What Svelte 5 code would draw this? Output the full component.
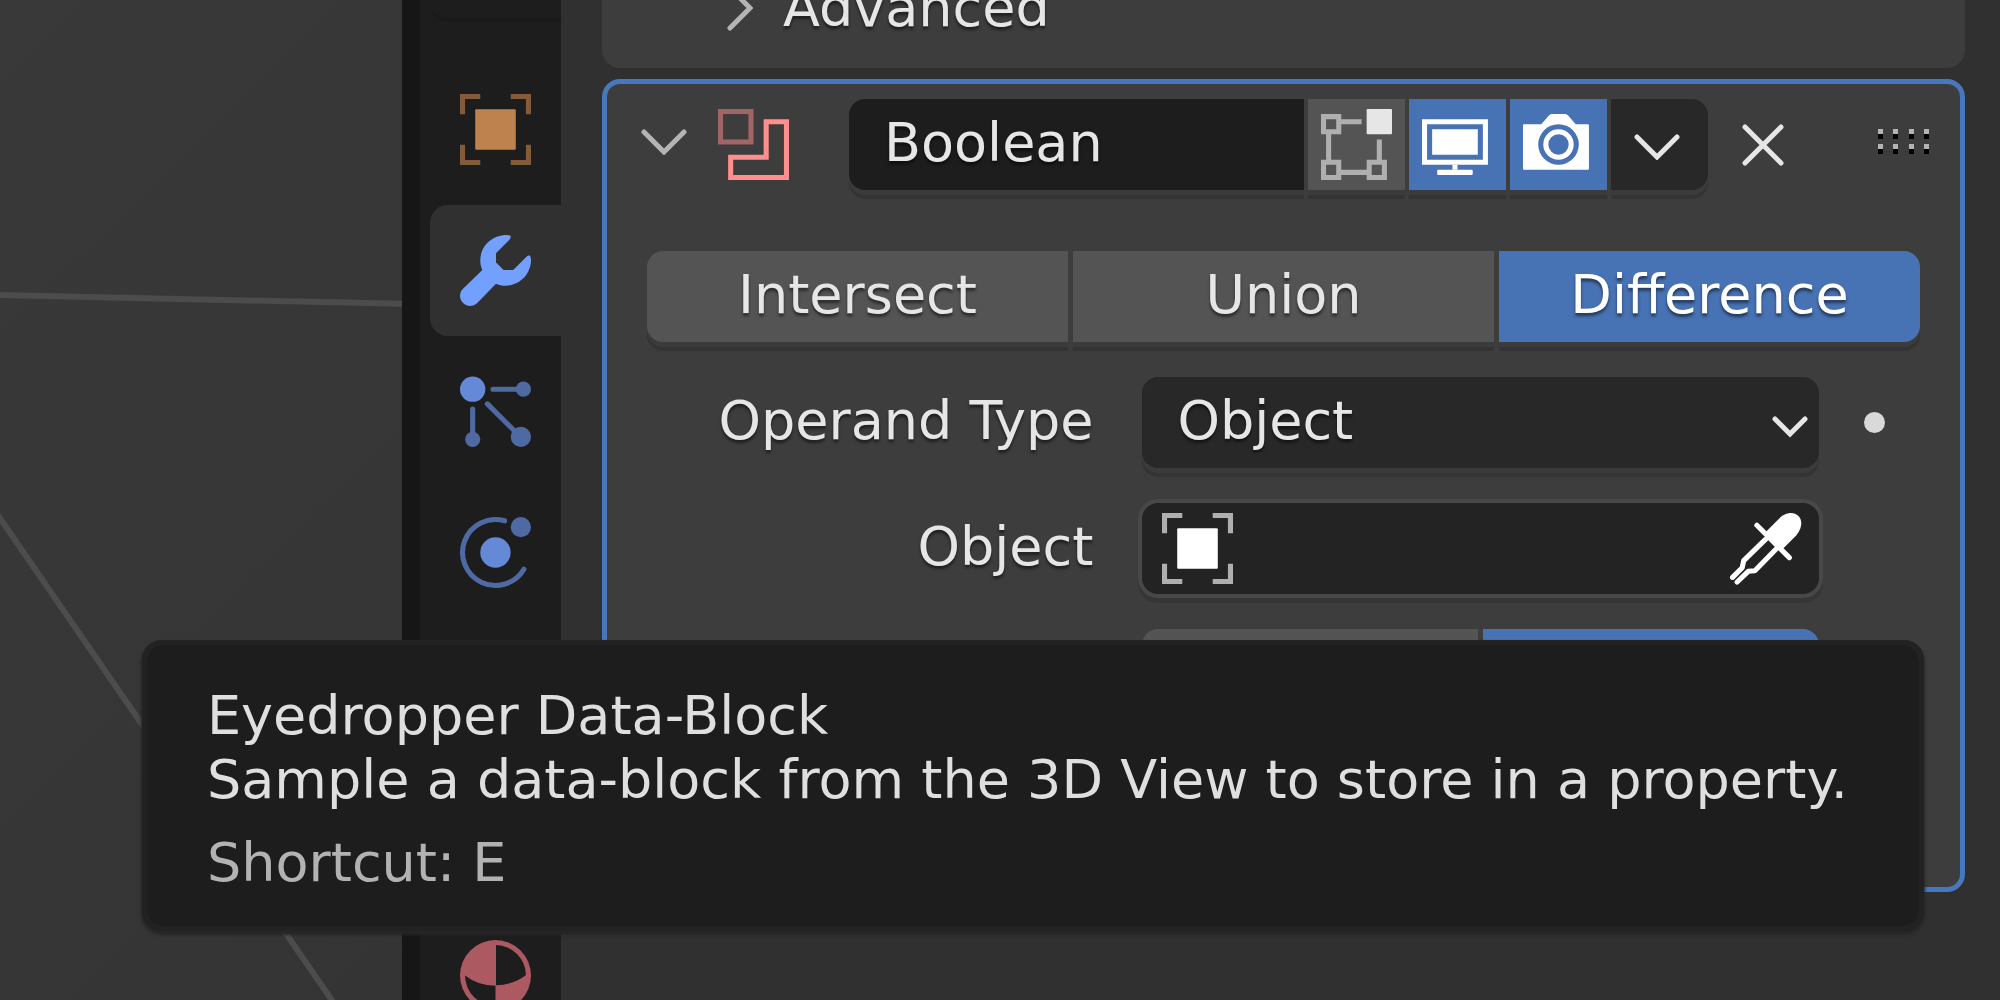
<script lang="ts">
	let operation = $state('Difference');
	let solver = $state('Exact');
	let operandType = $state('Object');
	let name = $state('Boolean');
	let target = $state('');
	let activeTab = $state('modifiers');

	const operations = ['Intersect', 'Union', 'Difference'];
	const solvers = ['Fast', 'Exact'];
	const tabs = ['object', 'modifiers', 'particles', 'physics', 'constraints', 'data', 'material'];
</script>

{#snippet chevron()}
	<svg class="chevron" viewBox="0 0 46 26" aria-hidden="true">
		<path d="M3 3l20 20L43 3" />
	</svg>
{/snippet}

{#snippet objectIcon()}
	<svg class="icon" viewBox="0 0 14 14" aria-hidden="true">
		<path class="frame" d="M0 4V0h4v1H1v3zM10 0h4v4h-1V1h-3zM0 10h1v3h3v1H0zM13 10h1v4h-4v-1h3z" />
		<rect x="3" y="3" width="8" height="8" rx=".2" />
	</svg>
{/snippet}

<div class="app">
	<div class="viewport">
		<svg class="grid-lines" aria-hidden="true">
			<path d="M-5 295L410 304M-5 511L340 1012" />
		</svg>
	</div>
	<div class="divider"></div>

	<nav class="tabs">
		<div class="tab-end"></div>
		{#each tabs as tab}
			<button
				class="tab {tab}"
				class:active={activeTab === tab}
				type="button"
				aria-label={tab}
				onclick={() => (activeTab = tab)}
			>
				{#if tab === 'object'}
					{@render objectIcon()}
				{:else if tab === 'modifiers'}
					<svg class="icon" viewBox="0 0 14 14" aria-hidden="true">
						<path
							d="M9.2 0c.5 0 .8.1.8.3 0 .3-.1.5-.3.7L7.1 3.6v1.8L8.6 6.9h1.9l2.600-2.600c.3-.3.5-.3.7-.2.1.2.2.5.2.8 0 2.800-2.200 5.100-5 5.100-.7 0-1.300-.1-1.900-.4l-3.700 3.800c-.8.8-2 .8-2.800 0s-.8-2 0-2.800l3.800-3.700C4.100 6.300 4 5.700 4 5c0-2.800 2.300-5 5.200-5z"
						/>
					</svg>
				{:else if tab === 'particles'}
					<svg class="icon" viewBox="0 0 14 14" aria-hidden="true">
						<g class="dim">
							<path d="M6.500 2.600h5M2.500 6.500v5M5.400 5.500l6 6" />
							<circle cx="12.500" cy="2.600" r="1.500" />
							<circle cx="2.500" cy="12.500" r="1.500" />
							<circle cx="12" cy="12" r="2" />
						</g>
						<circle cx="2.500" cy="2.600" r="2.500" />
					</svg>
				{:else if tab === 'physics'}
					<svg class="icon" viewBox="0 0 14 14" aria-hidden="true">
						<g class="dim">
							<path d="M8.800 .75A6.500 6.500 0 1 0 12.600 10.300" fill="none" />
							<circle cx="12" cy="2" r="2" />
						</g>
						<circle cx="7" cy="7" r="3" />
					</svg>
				{:else if tab === 'material'}
					<svg class="icon" viewBox="0 0 14 14" aria-hidden="true">
						<circle cx="7" cy="7" r="7" />
						<path class="cut" d="M7.100 1A6 6 0 0 1 13 6.900Q10.500 8.900 7.100 8.900zM1 7q2.500 2 6 2v4A6 6 0 0 1 1 7z" />
					</svg>
				{/if}
			</button>
		{/each}
	</nav>

	<main class="properties">
		<section class="panel advanced">
			<button class="expander" type="button">
				<svg class="arrow" viewBox="0 0 26 46" aria-hidden="true">
					<path d="M3 3l20 20L3 43" />
				</svg>
				Advanced
			</button>
		</section>

		<section class="panel modifier">
			<header>
				<button class="plain collapse" type="button" aria-label="Collapse">{@render chevron()}</button>
				<svg class="icon boolean" viewBox="0 0 14 14" aria-hidden="true">
					<rect x=".5" y=".5" width="6" height="6" />
					<path d="M9.500 2.500h4v11h-11v-4h7z" />
				</svg>
				<div class="name-row">
					<input class="name" type="text" aria-label="Name" bind:value={name} />
					<button class="toggle" type="button" aria-label="Edit Mode">
						<svg class="icon" viewBox="0 0 14 14" aria-hidden="true">
							<path
								class="mesh"
								d="M.5 1.500h3v3h-3zM.5 10.500h3v3h-3zM9.500 10.500h3v3h-3zM4 2.500h4M1.500 5v5M4 12.500h5M11.500 6v4"
							/>
							<rect x="9" y="0" width="5" height="5" rx=".2" />
						</svg>
					</button>
					<button class="toggle on" type="button" aria-label="Realtime">
						<svg class="icon" viewBox="0 0 14 14" aria-hidden="true">
							<path fill-rule="evenodd" d="M0 2h13v9H0zM1 3v7h11V3z" />
							<path d="M2 4h9v5H2zM6 11h1v1H6z" />
							<rect x="3" y="12" width="7" height="1" rx=".2" />
						</svg>
					</button>
					<button class="toggle on" type="button" aria-label="Render">
						<svg class="icon" viewBox="0 0 14 14" aria-hidden="true">
							<path d="M.2 3h3.400l1.500-1.700Q5.300 1 5.700 1h2.600q.4 0 .6.300L10.400 3h2.400q.2 0 .2.200v8.600q0 .2-.2.200H.2q-.2 0-.2-.2V3.200Q0 3 .2 3z" />
							<circle class="lens" cx="7" cy="7" r="4" />
							<circle cx="7" cy="7" r="3" />
							<circle class="lens" cx="7" cy="7" r="2" />
						</svg>
					</button>
					<button class="toggle more" type="button" aria-label="More">{@render chevron()}</button>
				</div>
				<button class="plain close" type="button" aria-label="Remove">
					<svg viewBox="0 0 42 42" aria-hidden="true">
						<path d="M3 3l36 36M39 3L3 39" />
					</svg>
				</button>
				<svg class="grip" viewBox="0 0 52 26" aria-hidden="true">
					{#each [0, 15, 31, 46] as x}
						{#each [0, 15] as y}
							<rect {x} {y} width="5" height="5" fill="#b4b4b4" />
							<rect {x} y={y + 5} width="5" height="5" fill="#000" />
						{/each}
					{/each}
				</svg>
			</header>

			<div class="body">
				<div class="segments">
					{#each operations as item}
						<button type="button" class:on={operation === item} onclick={() => (operation = item)}>{item}</button>
					{/each}
				</div>

				<div class="row">
					<label for="operand">Operand Type</label>
					<div class="dropdown">
						<select id="operand" bind:value={operandType}>
							<option>Object</option>
						</select>
						<svg viewBox="0 0 36 22" aria-hidden="true">
							<path d="M3 3l15 15L33 3" />
						</svg>
					</div>
					<button class="plain animate" type="button" aria-label="Animate property"></button>
				</div>

				<div class="row">
					<label for="target">Object</label>
					<div class="picker">
						{@render objectIcon()}
						<input id="target" type="text" bind:value={target} />
						<button class="plain" type="button" aria-label="Eyedropper Data-Block">
							<svg class="icon dropper" viewBox="0 0 14 14" aria-hidden="true">
								<path class="bulb" d="M6.600 4.200L10 .8C11.300-.3 12.700-.2 13.500.6s.8 2.300-.4 3.800L9.900 7.600z" />
								<path d="M5.300 2.400l6.400 6.400M7 5.200L2.700 9.400l-.3 1.400-1.900 1.900M9 7.200l-4.100 4.200-1.300.1-2.200 2.100" />
							</svg>
						</button>
					</div>
				</div>

				<div class="row">
					<span></span>
					<div class="segments">
						{#each solvers as item}
							<button
								type="button"
								aria-label={item}
								class:on={solver === item}
								onclick={() => (solver = item)}
							></button>
						{/each}
					</div>
				</div>
			</div>
		</section>
	</main>

	<div class="tooltip" role="tooltip">
		<p>Eyedropper Data-Block</p>
		<p>Sample a data-block from the 3D View to store in a property.</p>
		<p class="shortcut">Shortcut: E</p>
	</div>
</div>

<style>
	:global(body) {
		margin: 0;
		background: #303030;
	}

	.app {
		position: relative;
		display: grid;
		grid-template-columns: 402fr 18px 141px 1439fr;
		height: 100vh;
		overflow: hidden;
		background: #303030;
		color: #e6e6e6;
		font: 54px/64px 'DejaVu Sans', sans-serif;
	}

	button,
	input,
	select {
		box-sizing: border-box;
		margin: 0;
		padding: 0;
		border: 0;
		outline: 0;
		border-radius: 0;
		background: none;
		color: inherit;
		font: inherit;
		text-shadow: inherit;
	}

	svg {
		display: block;
		flex: none;
	}

	.icon {
		width: 71px;
		height: 71px;
		fill: currentColor;
		overflow: visible;
	}

	.plain {
		display: grid;
		place-items: center;
	}

	.chevron {
		width: 46px;
		height: 26px;
	}

	.chevron path,
	.arrow path,
	.close path,
	.dropdown path {
		fill: none;
		stroke: currentColor;
		stroke-width: 5;
		stroke-linecap: round;
	}

	/* 3D viewport */
	.viewport {
		min-width: 0;
		overflow: hidden;
		background: linear-gradient(135deg, #393939, #343434);
	}

	.grid-lines {
		width: 100%;
		height: 100%;
		fill: none;
		stroke: #4c4c4c;
		stroke-width: 6;
	}

	.divider {
		background: #161616;
	}

	/* Editor tabs */
	.tabs {
		display: flex;
		flex-direction: column;
		align-items: flex-end;
		gap: 10px;
		overflow: hidden;
		background: #1d1d1d;
	}

	.tab-end {
		flex: none;
		box-sizing: border-box;
		width: 131px;
		height: 22px;
		margin-bottom: 32px;
		border-bottom: 4px solid #1a1a1a;
		border-radius: 0 0 0 18px;
	}

	.tab {
		flex: none;
		display: grid;
		place-items: center start;
		width: 131px;
		height: 131px;
		padding-left: 30px;
		border-radius: 18px 0 0 18px;
	}

	.tab.active {
		background: #303030;
	}

	.object {
		color: #be824f;
	}

	.object .frame {
		fill: #825b3b;
	}

	.modifiers {
		color: #739fff;
	}

	.particles,
	.physics {
		color: #6489d6;
	}

	.dim {
		fill: #4f6aa2;
	}

	.dim path {
		stroke: #4f6aa2;
		stroke-linecap: round;
	}

	.material {
		color: #ad5962;
	}

	.cut {
		fill: #1d1d1d;
	}

	/* Properties */
	.properties {
		min-width: 0;
		padding: 0 35px 0 41px;
		text-shadow: 0 3px 3px rgba(0, 0, 0, 0.5);
	}

	.panel {
		box-sizing: border-box;
		border-radius: 18px;
		background: #3d3d3d;
	}

	.advanced {
		margin: -60px 0 11px;
		padding: 36px 125px 28px;
	}

	.expander {
		display: flex;
		align-items: center;
		gap: 30px;
	}

	.arrow {
		width: 26px;
		height: 46px;
		color: #b4b4b4;
	}

	.modifier {
		border: 5px solid #4877be;
		padding-bottom: 167px;
	}

	header {
		display: flex;
		align-items: center;
		padding: 15px 30px 0 34px;
	}

	.collapse {
		padding-bottom: 5px;
		color: #b4b4b4;
	}

	.boolean {
		margin: 0 60px 0 31px;
		fill: none;
		stroke: #ff8f8c;
	}

	.boolean rect {
		stroke: #a06565;
	}

	.name-row {
		display: flex;
		flex: 1;
		gap: 4px;
		min-width: 0;
	}

	.name {
		flex: 1;
		min-width: 0;
		height: 91px;
		padding: 0 35px 5px;
		border-radius: 16px 0 0 16px;
		background: #1d1d1d;
		box-shadow: 0 5px 0 #3b3b3b, 0 9px 0 #343434;
	}

	.toggle {
		display: grid;
		place-items: center;
		width: 97px;
		height: 91px;
		background: #545454;
		box-shadow: 0 5px 0 #3b3b3b, 0 9px 0 #343434;
	}

	.toggle.on {
		background: #4772b3;
		color: #fff;
	}

	.toggle.more {
		padding: 4px 5px 0 0;
		border-radius: 0 16px 16px 0;
		background: #282828;
	}

	.mesh {
		fill: none;
		stroke: #afafaf;
	}

	.lens {
		fill: #4772b3;
	}

	.close {
		margin: 0 94px 0 34px;
	}

	.close svg {
		width: 42px;
		height: 42px;
	}

	.grip {
		width: 52px;
		height: 26px;
		margin-bottom: 5px;
	}

	.body {
		display: grid;
		gap: 35px;
		padding: 61px 40px 0;
	}

	.segments {
		display: flex;
		gap: 5px;
	}

	.segments button {
		flex: 1;
		height: 91px;
		padding-bottom: 3px;
		background: #545454;
		box-shadow: 0 5px 0 #3b3b3b, 0 9px 0 #343434;
	}

	.segments button:first-child {
		border-radius: 16px 0 0 16px;
	}

	.segments button:last-child {
		border-radius: 0 16px 16px 0;
	}

	.segments button.on {
		background: #4772b3;
		color: #fff;
	}

	.row {
		display: grid;
		grid-template-columns: minmax(0, 495fr) minmax(0, 676fr) 101px;
		align-items: center;
	}

	label {
		padding: 0 49px 3px 0;
		text-align: right;
	}

	.dropdown {
		position: relative;
	}

	select {
		display: block;
		appearance: none;
		width: 100%;
		height: 91px;
		padding: 0 60px 3px 35px;
		border-radius: 16px;
		background: #282828;
		box-shadow: 0 5px 0 #3b3b3b, 0 9px 0 #343434;
	}

	.dropdown svg {
		position: absolute;
		top: 39px;
		right: 11px;
		width: 36px;
		height: 22px;
		pointer-events: none;
	}

	.animate {
		justify-self: center;
		width: 21px;
		height: 21px;
		margin-left: 10px;
		border-radius: 50%;
		background: #d9d9d9;
	}

	.picker {
		display: flex;
		align-items: center;
		height: 91px;
		padding: 0 18px 0 20px;
		border-radius: 16px;
		background: #232323;
		box-shadow: 0 0 0 4px #484848, 0 5px 0 4px #363636;
		color: #fff;
	}

	.picker .frame {
		fill: #afafaf;
	}

	.picker input {
		flex: 1;
		min-width: 0;
		height: 71px;
		padding: 0 16px;
	}

	.dropper {
		fill: none;
		stroke: currentColor;
		stroke-linecap: round;
		stroke-linejoin: round;
	}

	.dropper .bulb {
		fill: currentColor;
		stroke: none;
	}

	/* Tooltip */
	.tooltip {
		position: absolute;
		top: 640px;
		right: 76px;
		left: 142px;
		padding: 39px 60px 31px;
		border: 5px solid #222;
		border-radius: 20px;
		background: #1d1d1d;
		background-clip: padding-box;
		box-shadow: 0 3px 3px 1px #262626;
		color: #dfdfdf;
		white-space: nowrap;
	}

	.tooltip p {
		margin: 0;
	}

	.tooltip .shortcut {
		margin-top: 19px;
		color: #b2b2b2;
	}
</style>
